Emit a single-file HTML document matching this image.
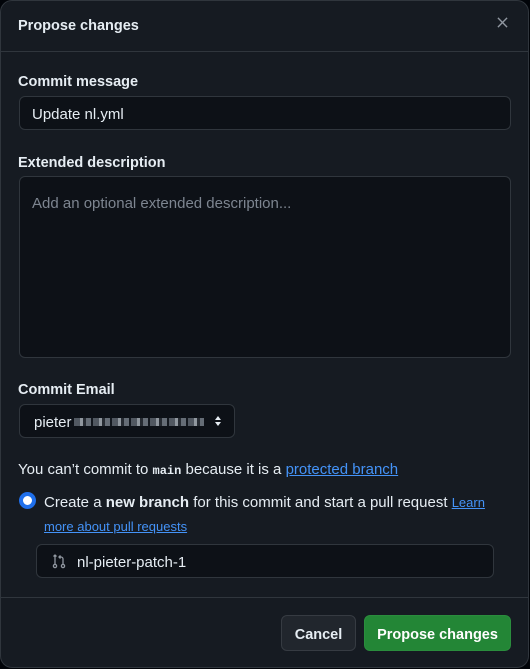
<!DOCTYPE html>
<html><head><style>
*{box-sizing:border-box;margin:0;padding:0}
body{width:530px;height:669px;background:#010409;font-family:"Liberation Sans",sans-serif;color:#e6edf3;position:relative;overflow:hidden}
.dlg{position:absolute;left:0;top:0;width:529px;height:668px;background:#161b22;border:1px solid #30363d;border-radius:12px}
.abs{position:absolute}
.lbl{font-size:14.5px;font-weight:bold;color:#e6edf3}
.inp{background:#0d1117;border:1px solid #30363d;border-radius:6px}
a{color:#4493f8;text-decoration:underline}
.t{font-size:15px}
</style></head><body>
<div class="dlg"></div>
<div class="abs" style="left:18px;top:18px;font-size:14.5px;font-weight:bold">Propose changes</div>
<svg class="abs" style="left:497px;top:17px" width="11" height="11" viewBox="0 0 12 12"><path d="M1 1L11 11M11 1L1 11" stroke="#9198a1" stroke-width="1.5"/></svg>
<div class="abs" style="left:1px;top:51px;width:527px;height:1px;background:#30363d"></div>
<div class="abs lbl" style="left:18px;top:74px">Commit message</div>
<div class="abs inp t" style="left:19px;top:96px;width:492px;height:34px;padding:9px 12px 0">Update nl.yml</div>
<div class="abs lbl" style="left:18px;top:155px">Extended description</div>
<div class="abs inp t" style="left:19px;top:176px;width:492px;height:182px;padding:18px 12px;color:#7d8590">Add an optional extended description...</div>
<div class="abs lbl" style="left:18px;top:382px">Commit Email</div>
<div class="abs inp t" style="left:19px;top:404px;width:216px;height:34px;padding:9px 14px 0">pieter</div>
<div class="abs" style="left:74px;top:418px;width:130px;height:8px;background:repeating-linear-gradient(90deg,#6e7681 0 6px,#c9d1d9 6px 9px,#30363d 9px 12px,#8b949e 12px 17px,#161b22 17px 19px);opacity:.7"></div>
<svg class="abs" style="left:214px;top:415px" width="8" height="12" viewBox="0 0 8 12"><path d="M4 1L7 5H1ZM4 11L7 7H1Z" fill="#e6edf3"/></svg>
<div class="abs t" style="left:18px;top:461px">You can’t commit to <span style="font-family:'Liberation Mono',monospace;font-size:12px;font-weight:bold">main</span> because it is a <a>protected branch</a></div>
<div class="abs" style="left:19px;top:492px;width:17px;height:17px;border-radius:50%;background:#fff;border:4px solid #1f6feb"></div>
<div class="abs t" style="left:44px;top:491px;line-height:24px;width:452px">Create a <b>new branch</b> for this commit and start a pull request <a style="font-size:13px">Learn more about pull requests</a></div>
<div class="abs inp t" style="left:36px;top:544px;width:458px;height:34px;padding:9px 0 0 40px">nl-pieter-patch-1</div>
<svg class="abs" style="left:51px;top:553px" width="16" height="16" viewBox="0 0 16 16"><g fill="none" stroke="#9198a1" stroke-width="1.3"><circle cx="4" cy="13" r="1.6"/><circle cx="12" cy="13" r="1.6"/><path d="M4 11.4V2M2.5 3.5L4 2 5.5 3.5M12 11.4V6a2 2 0 0 0-2-2H8M9.5 2.5L8 4l1.5 1.5"/></g></svg>
<div class="abs" style="left:1px;top:597px;width:527px;height:1px;background:#30363d"></div>
<div class="abs" style="left:281px;top:615px;width:75px;height:36px;background:#21262d;border:1px solid #363b42;border-radius:6px;font-size:14.5px;font-weight:bold;text-align:center;line-height:38px">Cancel</div>
<div class="abs" style="left:364px;top:615px;width:147px;height:36px;background:#238636;border:1px solid #2a8d3d;border-radius:6px;font-size:14.5px;font-weight:bold;text-align:center;line-height:38px;color:#fff">Propose changes</div>
</body></html>
